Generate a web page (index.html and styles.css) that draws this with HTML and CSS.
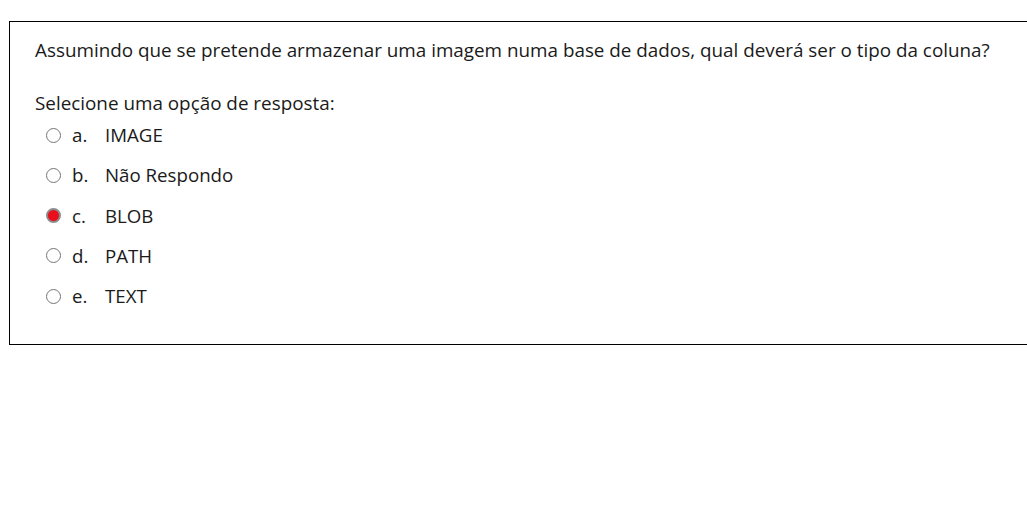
FILE: index.html
```html
<!DOCTYPE html>
<html lang="pt">
<head>
<meta charset="utf-8">
<link rel="stylesheet" href="styles.css">
</head>
<body>
<div class="question">
  <p class="qtext">Assumindo que se pretende armazenar uma imagem numa base de dados, qual deverá ser o tipo da coluna?</p>
  <div class="prompt">Selecione uma opção de resposta:</div>
  <div class="answers">
    <label class="opt"><input type="radio" name="q" class="radio"><span class="letter">a.</span><span class="label">IMAGE</span></label>
    <label class="opt"><input type="radio" name="q" class="radio"><span class="letter">b.</span><span class="label">Não Respondo</span></label>
    <label class="opt"><input type="radio" name="q" class="radio" checked><span class="letter">c.</span><span class="label">BLOB</span></label>
    <label class="opt"><input type="radio" name="q" class="radio"><span class="letter">d.</span><span class="label">PATH</span></label>
    <label class="opt"><input type="radio" name="q" class="radio"><span class="letter">e.</span><span class="label">TEXT</span></label>
  </div>
</div>
</body>
</html>
```
FILE: styles.css
```css
html, body {
  margin: 0;
  padding: 0;
  background: #fff;
}
body {
  padding: 21px 0 0 9px;
  font-family: "Open Sans", "Liberation Sans", sans-serif;
  color: #1a1a1a;
  overflow: hidden;
}
.question {
  width: 1040px;
  border: 1px solid #000;
  padding: 14px 25px 28px 25px;
  box-sizing: border-box;
}
.qtext {
  margin: 0;
  font-size: 18.85px;
  line-height: 28px;
}
.prompt {
  margin-top: 25px;
  font-size: 18.85px;
  line-height: 28px;
}
.answers {
  display: flex;
  flex-direction: column;
  margin-top: -2px;
}
.opt {
  display: flex;
  align-items: center;
  height: 40.25px;
  font-size: 18.7px;
  line-height: 28px;
}
.radio {
  appearance: none;
  -webkit-appearance: none;
  width: 15px;
  height: 15px;
  margin: 0 11px 0 11px;
  border: 1px solid #767676;
  border-radius: 50%;
  background: #fff;
  box-sizing: border-box;
  flex: none;
}
.radio:checked {
  background: #e8101c;
  border: 2px solid #8c8c8c;
}
.letter {
  width: 33px;
  flex: none;
}
```
